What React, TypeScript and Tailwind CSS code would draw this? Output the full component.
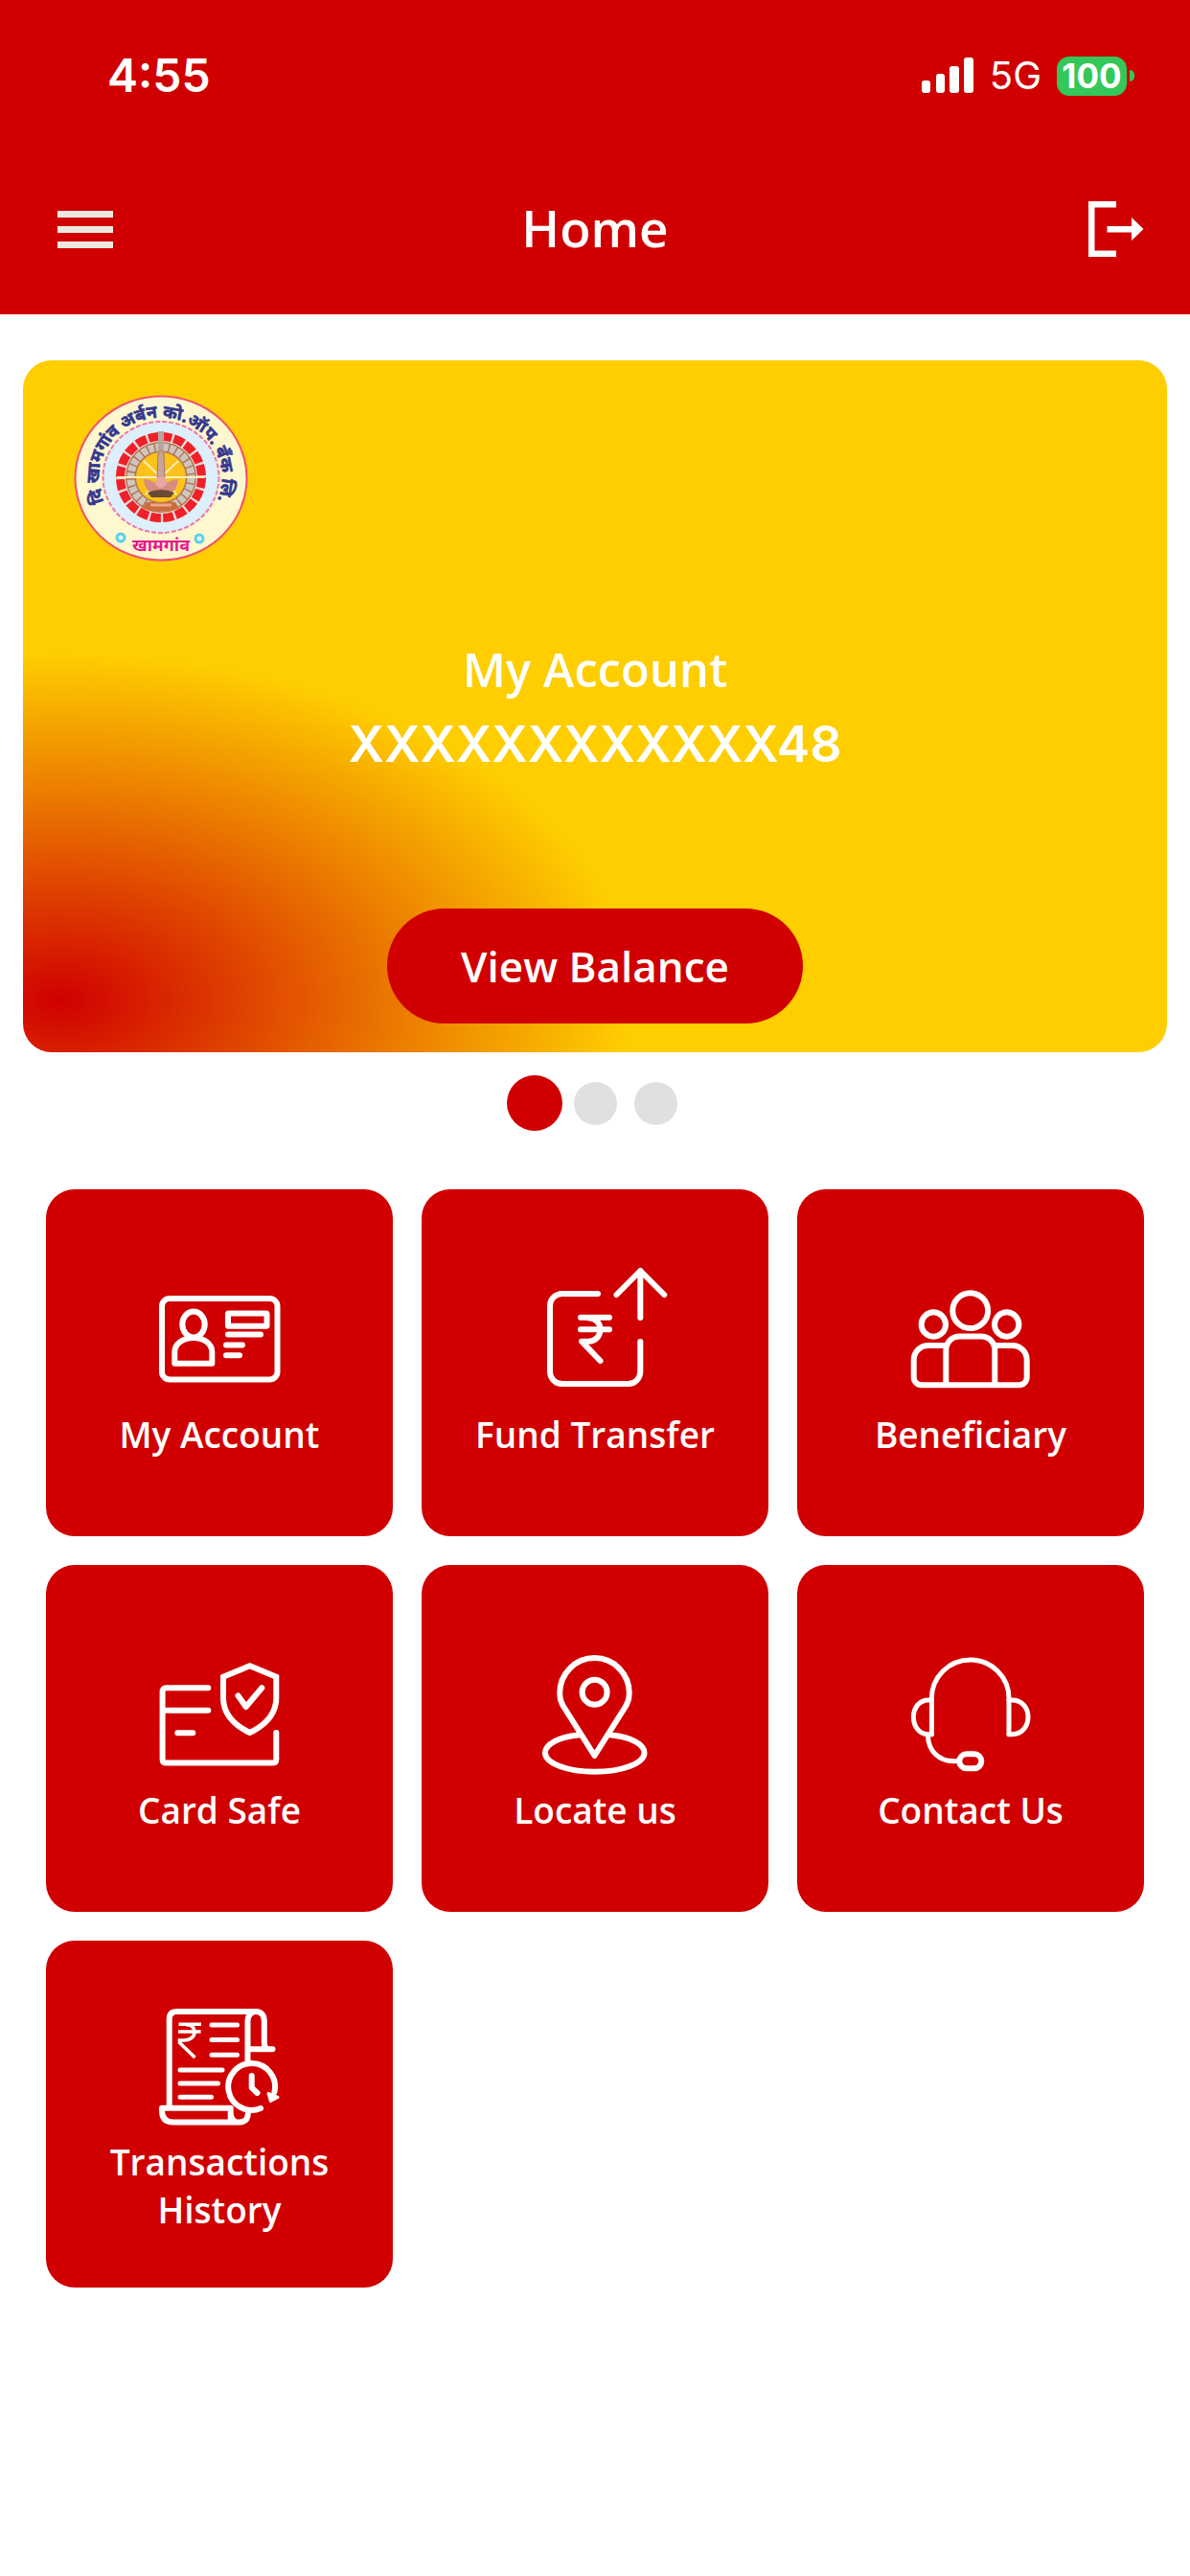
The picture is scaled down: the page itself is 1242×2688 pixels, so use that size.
import type { ReactNode } from 'react';

const line = {
  fill: 'none',
  stroke: 'currentColor',
  strokeWidth: 6,
  strokeLinecap: 'round',
  strokeLinejoin: 'round',
} as const;

function TileIcon({ children, weight = 6 }: { children: ReactNode; weight?: number }) {
  return (
    <svg viewBox="0 0 126 126" className="size-[126px] shrink-0 overflow-visible" {...line} strokeWidth={weight} aria-hidden="true">
      {children}
    </svg>
  );
}

const AccountIcon = () => (
  <TileIcon>
    <rect x="3" y="21" width="120.5" height="84.5" rx="8" />
    <ellipse cx="36" cy="48" rx="11.7" ry="13.4" />
    <path d="M16.3 88.7V77C16.3 68 25 62 36 62S55.3 68 55.3 77V88.7Z" />
    <rect x="72" y="36.5" width="40.5" height="13.2" rx="0.5" />
    <path d="M72 58.4H106M70 69.4H87M70 80.2H84" />
  </TileIcon>
);

const TransferIcon = () => (
  <TileIcon>
    <path d="M66 16H28.7A12.7 12.7 0 0 0 16 28.7V97.3A12.7 12.7 0 0 0 28.7 110H97.6A12.7 12.7 0 0 0 110.3 97.3V66" />
    <path d="M110.3 41V-8M85.5 17L110.3-8L135.2 17" />
    <path d="M48 40.7H78M48 53.3H78M56 41.2C64 41.2 68.5 47 68.5 53.3S64 65.7 56 65.7H49L68.5 86" />
  </TileIcon>
);

const BeneficiaryIcon = () => (
  <TileIcon>
    <circle cx="62.7" cy="33.7" r="18.4" />
    <circle cx="24.3" cy="48" r="12.7" />
    <circle cx="100.7" cy="48" r="12.7" />
    <path d="M37.3 70H19C10.5 70 3.7 76.5 3.7 85V103.3A8 8 0 0 0 11.7 111.3H113.7A8 8 0 0 0 121.7 103.3V85C121.7 76.5 115 70 106.5 70H88.3" />
    <path d="M37.3 111V75C37.3 66.5 43.5 60.6 51.7 60.6H74C82 60.6 88.3 66.5 88.3 75V111" />
  </TileIcon>
);

const CardSafeIcon = () => (
  <TileIcon>
    <path d="M51.3 35.3H7.5Q3.6 35.3 3.6 39.5V109.7Q3.6 113.6 7.5 113.6H118.3Q122.3 113.6 122.3 109.7V82M3.6 58.7H51.3M19.3 82.3H35.3" />
    <path strokeLinejoin="miter" d="M94.7 12.3L67 23.8V45.5C67 61 77 73.5 94.7 82C112.3 73.5 122.3 61 122.3 45.5V23.8Z" />
    <path d="M82.5 43.5L90.7 55L107.3 35.3" />
  </TileIcon>
);

const LocateIcon = () => (
  <TileIcon>
    <path d="M62.5 106L30 54.5C27 49.5 26.2 46 26.2 40.8A36.3 36.8 0 0 1 98.8 40.8C98.8 46 98 49.5 95 54.5Z" />
    <circle cx="62.6" cy="39.8" r="13" />
    <path d="M45.5 84.5C25.5 86.5 11 94 11 103C11 114 34 122.7 62.7 122.7S114.5 114 114.5 103C114.5 94 100 86.5 80 84.5" />
  </TileIcon>
);

const ContactIcon = () => (
  <TileIcon weight={5}>
    <path d="M22.4 83.7V46A40.3 40 0 0 1 103 46V83.7" />
    <path d="M22.4 48H19C10 48 3.4 55.5 3.4 65.7S10 83.7 19 83.7H22.4M103 48H106.5C116 48 123 55.5 123 65.7S116 83.7 106.5 83.7H103" />
    <path d="M18.5 84.5C18.5 101 30 111.7 45 111.7H50" />
    <rect x="51.3" y="104.3" width="23" height="15" rx="7.5" strokeWidth="6" />
  </TileIcon>
);

const HistoryIcon = () => (
  <TileIcon>
    <path d="M10.7 104V14Q10.7 6 18.7 6H101C107 6 109.8 10.5 109.8 16V38Q109.8 44 114 45.3H118.5H95M101 6C96 6 92.5 10.5 92.5 16V58" />
    <path d="M3 106.7H74.7V121M3 106.7V109.5Q3 121.5 15 121.5H84Q92.7 121.5 93 111.5M81 121.5Q74.7 119 74.7 112" />
    <path strokeWidth="5" d="M55 20H81.5M55 35.6H81.5M55 51.3H81.5M22 67H66M22 81H61.5M22 95.2H54.5" />
    <path d="M106 107A24.4 24.4 0 1 1 120.4 90" />
    <path strokeWidth="3" fill="currentColor" d="M114 91.5L124 95.5L116.5 99.5Z" />
    <path d="M96.7 73V85.3L102.5 91" />
    <path strokeWidth="3.6" strokeLinecap="butt" strokeLinejoin="miter" d="M20.5 19.3H44M20 27H43.5M28 19.8C34.5 19.8 37 23 37 27.5S33 36 26 36H21.5V38.5L37.5 54" />
  </TileIcon>
);

const tiles: { label: string; icon: ReactNode }[] = [
  { label: 'My Account', icon: <AccountIcon /> },
  { label: 'Fund Transfer', icon: <TransferIcon /> },
  { label: 'Beneficiary', icon: <BeneficiaryIcon /> },
  { label: 'Card Safe', icon: <CardSafeIcon /> },
  { label: 'Locate us', icon: <LocateIcon /> },
  { label: 'Contact Us', icon: <ContactIcon /> },
  { label: 'Transactions History', icon: <HistoryIcon /> },
];

function BankSeal() {
  return (
    <svg viewBox="0 0 182 174" className="h-[174px] w-[182px]" role="img" aria-label="Bank seal">
      <defs>
        <path id="seal-top" d="M36 120A64 63 0 1 1 146 118" />
      </defs>
      <ellipse cx="91" cy="87" rx="89.5" ry="85.5" fill="#fff8cf" stroke="#f2506e" strokeWidth="2" />
      <ellipse cx="91" cy="86" rx="60.5" ry="58" fill="#dceffa" stroke="#f075a8" strokeWidth="2" strokeDasharray="5 2" />
      <circle cx="91" cy="86" r="47" fill="#e9dcd6" />
      <circle cx="91" cy="86" r="42.5" fill="none" stroke="#ef2029" strokeWidth="9" strokeDasharray="11 2.35" />
      <circle cx="91" cy="86" r="37" fill="#b5744f" />
      <circle cx="91" cy="86" r="31.5" fill="none" stroke="#cdc6c0" strokeWidth="8" strokeDasharray="6 1.5" />
      <circle cx="91" cy="86" r="26" fill="#fbc21a" />
      <path d="M91 86L73 69M91 86L109 69M91 86H45M91 86H137M91 86L75 104M91 86L107 104" stroke="#fdeebb" strokeWidth="2" />
      <path d="M88 38H94V68H88Z" fill="#b9a49a" />
      <path d="M88 62Q91 54 94 62L95 86H87Z" fill="#c9a49a" stroke="#a9796b" />
      <path d="M73 88Q80 88 84 92Q91 82 98 92Q102 88 109 88Q108 101 98 103H84Q74 101 73 88Z" fill="#d88c80" />
      <circle cx="91" cy="91" r="6" fill="#e9a7a1" />
      <path d="M77 102Q91 96 105 102L101 107H81Z" fill="#6b4a35" />
      <path d="M76 112H106L110 119Q91 124 72 119Z" fill="#cc6b3c" />
      <path d="M80 115H102" stroke="#e9a88e" strokeWidth="3" />
      <g fill="#dff6fb" stroke="#5fd0ea" strokeWidth="3">
        <circle cx="49" cy="149" r="4" />
        <circle cx="131" cy="150" r="4" />
      </g>
      <text className="font-['Noto_Sans',sans-serif] text-[18px] font-bold" fill="#35378f" stroke="#35378f" strokeWidth="0.6">
        <textPath href="#seal-top" startOffset="50%" textAnchor="middle">
          दि खामगांव अर्बन को.ऑप. बँक लि.
        </textPath>
      </text>
      <text x="91" y="163" textAnchor="middle" className="font-['Noto_Sans',sans-serif] text-[18px] font-bold" fill="#e8168f">
        खामगांव
      </text>
    </svg>
  );
}

function StatusBar() {
  return (
    <div className="flex h-[158px] items-center justify-between pr-[58px] pl-28 font-['Inter',sans-serif] text-white">
      <span className="text-[48px] leading-none font-semibold">4:55</span>
      <div className="flex items-center">
        <svg viewBox="0 0 54 38" className="h-[38px] w-[54px]" fill="currentColor" aria-hidden="true">
          <rect x="0" y="24" width="9" height="13" rx="3" />
          <rect x="15" y="17" width="9" height="20" rx="3" />
          <rect x="29" y="9" width="10" height="28" rx="3" />
          <rect x="44" y="0" width="10" height="37" rx="3" />
        </svg>
        <span className="ml-[17px] text-[40px] leading-none">5G</span>
        <span className="ml-4 flex h-[41px] w-[73px] items-center justify-center rounded-[13px] bg-[#34c759] text-[35px] leading-none font-bold">
          100
        </span>
        <span className="ml-[3px] h-3 w-[5px] rounded-r-full bg-[#34c759]" />
      </div>
    </div>
  );
}

export default function App() {
  return (
    <div className="min-h-screen bg-white font-['Open_Sans',sans-serif] text-white">
      <header className="bg-[#d00000]">
        <StatusBar />
        <div className="flex h-[170px] items-center justify-between px-12 pb-2">
          <button type="button" aria-label="Menu" className="flex w-[82px] flex-col gap-[9px] px-3">
            <span className="h-[7px] w-full bg-[#eee9e0]" />
            <span className="h-[7px] w-full bg-[#eee9e0]" />
            <span className="h-[7px] w-full bg-[#eee9e0]" />
          </button>
          <h1 className="pb-1 text-[53px] leading-none font-semibold">Home</h1>
          <button type="button" aria-label="Log out" className="flex w-[82px] justify-end">
            <svg viewBox="0 0 58 58" className="size-[58px]" fill="currentColor" aria-hidden="true">
              <path d="M0 0H29V6.5H6.5V51.5H29V58H0Z" />
              <path d="M19.5 26H45V17L57.5 29L45 41V32.5H19.5Z" />
            </svg>
          </button>
        </div>
      </header>

      <main className="pt-12">
        <section
          aria-label="Account"
          className="mx-6 flex h-[722px] flex-col rounded-[30px] bg-[#fece00] bg-[radial-gradient(ellipse_50%_50%_at_3.2%_92.5%,#d00000,#fece00)] px-[53px] pt-9 pb-[30px]"
        >
          <BankSeal />
          <div className="mt-[74px] flex flex-col items-center">
            <p className="text-[49px] leading-[76px] font-semibold">My Account</p>
            <p className="font-['Inter',sans-serif] text-[52px] leading-[82px] font-semibold">XXXXXXXXXXXX48</p>
          </div>
          <button type="button" className="mx-auto mt-auto h-[120px] w-[434px] rounded-full bg-[#d00000] text-[44px] leading-none font-semibold">
            View Balance
          </button>
        </section>

        <div className="mt-6 flex h-[58px] items-center justify-center">
          <span className="flex w-[63px] justify-center">
            <button type="button" aria-label="Account 1" aria-current="true" className="size-[58px] rounded-full bg-[#d00000]" />
          </span>
          <span className="flex w-[63px] justify-center">
            <button type="button" aria-label="Account 2" className="size-[45px] rounded-full bg-[#e0e0e0]" />
          </span>
          <span className="flex w-[63px] justify-center">
            <button type="button" aria-label="Account 3" className="size-[45px] rounded-full bg-[#e0e0e0]" />
          </span>
        </div>

        <nav aria-label="Services" className="mt-[61px] grid grid-cols-3 gap-[30px] px-12">
          {tiles.map((tile) => (
            <button
              key={tile.label}
              type="button"
              className="flex aspect-square flex-col items-center justify-center gap-3 rounded-[30px] bg-[#d00000] px-8 pt-3"
            >
              {tile.icon}
              <span className="text-center text-[37px] leading-[50px] font-semibold">{tile.label}</span>
            </button>
          ))}
        </nav>
      </main>
    </div>
  );
}
